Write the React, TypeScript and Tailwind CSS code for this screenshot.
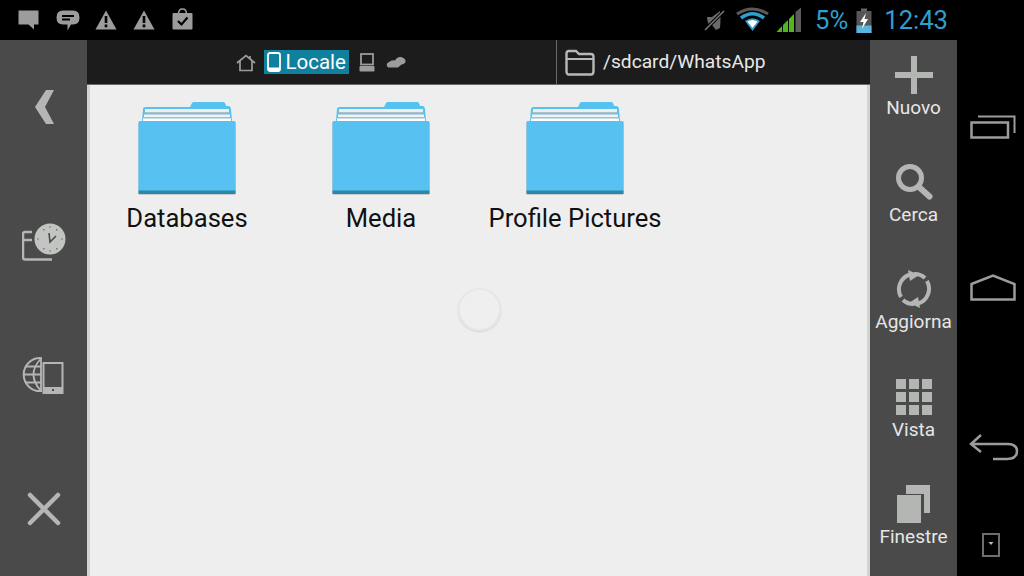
import React from "react";

const G = "#9c9c9c";
const R = "#b4b6b4";

function Folder() {
  return (
    <svg width="98" height="94" viewBox="0 0 98 94" className="block">
      <path d="M4 20 L5 8 Q5 6 8 6 L52 6 L54 2 Q54.500 1 56 1 L85 1 Q87 1 87.500 3 L88 5 L91 5 Q93 6 93 8 L94 20 Z" fill="#55c2f0" />
      <rect x="7" y="8" width="84" height="3.500" fill="#eeeeee" />
      <rect x="6.500" y="11.500" width="85" height="2" fill="#aab0b0" />
      <rect x="6" y="13.500" width="86" height="2.500" fill="#f2f2f2" />
      <rect x="5.500" y="16" width="87" height="1.500" fill="#b4b9b9" />
      <rect x="5" y="17.500" width="88" height="2.500" fill="#ffffff" />
      <path d="M-0 22 Q0 20 2 20 L96 20 Q98 20 98 22 L98 91 Q98 94 96 94 L2 94 Q0 94 0 91 Z" fill="#bdbdbd" opacity="0.75" />
      <path d="M0.500 22 Q0.500 20 2 20 L96 20 Q97.500 20 97.500 22 L97.500 90 L0.500 90 Z" fill="#57c2f1" />
      <rect x="0.500" y="89.500" width="97" height="3.500" fill="#2d87ab" />
    </svg>
  );
}

function FolderItem({ name }: { name: string }) {
  return (
    <div className="flex w-[194px] flex-col items-center">
      <Folder />
      <span className="mt-[7px] whitespace-nowrap text-[25.6px] leading-[32px] text-[#111111]">{name}</span>
    </div>
  );
}

function Warning() {
  return (
    <svg width="22" height="20" viewBox="0 0 22 20">
      <path d="M11 0.500 L21.500 19.500 L0.500 19.500 Z" fill={G} />
      <rect x="9.700" y="6" width="2.600" height="7" fill="#000" />
      <rect x="9.700" y="14.500" width="2.600" height="2.800" fill="#000" />
    </svg>
  );
}

function StatusLeft() {
  return (
    <div className="flex items-center">
      <svg width="21" height="20" viewBox="0 0 21 20" className="ml-[18px]">
        <path d="M0.500 0.500 H20.500 V14.500 H16 V19.500 L10.500 14.500 H0.500 Z" fill={G} />
      </svg>
      <svg width="24" height="21" viewBox="0 0 24 21" className="ml-[17px]">
        <path d="M7 0.500 H17 Q23.500 0.500 23.500 7.500 Q23.500 14.500 17 14.500 H15 L11.500 20.500 V14.500 H7 Q0.500 14.500 0.500 7.500 Q0.500 0.500 7 0.500 Z" fill={G} />
        <rect x="6" y="5" width="12" height="2" fill="#000" />
        <rect x="6" y="8.500" width="8" height="2" fill="#000" />
      </svg>
      <span className="ml-[15px] flex"><Warning /></span>
      <span className="ml-[16px] flex"><Warning /></span>
      <svg width="21" height="22" viewBox="0 0 21 22" className="ml-[17px] -mt-[2px]">
        <path d="M6.500 6 Q6.500 1 10.500 1 Q14.500 1 14.500 6" fill="none" stroke={G} strokeWidth="1.500" />
        <rect x="0.500" y="5" width="20" height="16.500" rx="1" fill={G} />
        <path d="M6 13 L9.500 16.500 L15.500 9.500" fill="none" stroke="#000" strokeWidth="2.200" />
      </svg>
    </div>
  );
}

function StatusRight() {
  return (
    <div className="flex items-center">
      <svg width="22" height="24" viewBox="0 0 22 24">
        <path d="M3 9 L8 9 L16 3 Q17 10 16 20 L12 22 L8 17 H5 Q3 13 3 9 Z" fill="#6b6b6b" />
        <path d="M1 22 L20 3" stroke="#000" strokeWidth="3.400" />
        <path d="M1 22 L20 3" stroke="#7d7d7d" strokeWidth="1.500" />
      </svg>
      <svg width="33" height="26" viewBox="0 0 33 26" className="ml-[10px]">
        <path d="M1 7 Q16.500 -3 32 7" fill="none" stroke="#5a5a5a" strokeWidth="3" />
        <path d="M5 11 Q16.500 2.500 28 11" fill="none" stroke="#2f9fd0" strokeWidth="3.500" />
        <path d="M9 14 Q16.500 8.500 24 14 L16.500 24 Z" fill="#2f9fd0" />
        <path d="M11.500 14.500 Q16.500 11.500 21.500 14.500 L16.500 21 Z" fill="#ffffff" />
      </svg>
      <svg width="26" height="26" viewBox="0 0 26 26" className="ml-[7px]">
        <path d="M0.500 25 L6 19 V25 Z" fill="#4fb81c" />
        <path d="M7 18 L12 13 V25 H7 Z" fill="#4fb81c" />
        <path d="M13 12 L18 7 V25 H13 Z" fill="#4fb81c" />
        <path d="M19.500 5 L25 0.500 V25 H19.500 Z" fill="#5c5c5c" />
      </svg>
      <span className="ml-[13px] text-[25.6px] leading-[32px] text-[#2f9fd0]">5%</span>
      <svg width="16" height="25" viewBox="0 0 16 25" className="ml-[8px]">
        <rect x="5" y="0.500" width="6" height="3" fill="#666" />
        <rect x="0.500" y="3" width="15" height="22" fill="#555" />
        <rect x="0.500" y="17.500" width="15" height="7.500" fill="#5bb4dc" />
        <path d="M10 5 L4 14 H7.500 L6 21 L12 11 H8.500 Z" fill="#ffffff" />
      </svg>
      <span className="ml-[12px] text-[25.6px] leading-[32px] text-[#2f9fd0]">12:43</span>
    </div>
  );
}

function LeftRail() {
  return (
    <div className="grid w-[87px] shrink-0 grid-rows-4 place-items-center bg-[#4a4a4a]">
      <svg width="20" height="36" viewBox="0 0 20 36">
        <path d="M12 1 H20 L11 18 L20 35 H12 L1 18 Z" fill={R} />
      </svg>
      <svg width="44" height="38" viewBox="0 0 44 38" className="mt-[2px]">
        <path d="M10 9 H3 Q1 9 1 11 V34 Q1 36.500 3 36.500 H30" fill="none" stroke={R} strokeWidth="2.500" />
        <path d="M2 17 H10" stroke={R} strokeWidth="2.500" fill="none" />
        <circle cx="28" cy="16" r="15.500" fill="#c2c4c2" />
        <path d="M27 10 L28 19 L34 13" stroke="#4a4a4a" strokeWidth="1.600" fill="none" />
        <g fill="#777">
          <rect x="27.500" y="3" width="1" height="2" />
          <rect x="27.500" y="27" width="1" height="2" />
          <rect x="15" y="15.500" width="2" height="1" />
          <rect x="39" y="15.500" width="2" height="1" />
          <rect x="21" y="6" width="1.500" height="1.500" />
          <rect x="34" y="6" width="1.500" height="1.500" />
          <rect x="21" y="25" width="1.500" height="1.500" />
          <rect x="34" y="25" width="1.500" height="1.500" />
        </g>
      </svg>
      <svg width="42" height="37" viewBox="0 0 42 37" className="mr-[2px]">
        <path d="M20 1.200 A16.500 16.500 0 1 0 20 34" fill="none" stroke={R} strokeWidth="2" />
        <path d="M19 1.500 Q4 17.500 19 34 M19 1.500 V34 M1 17.500 H20 M3.500 9.500 H20 M3.500 25.500 H20" fill="none" stroke={R} strokeWidth="1.800" />
        <rect x="21.500" y="6" width="19" height="30" fill="none" stroke={R} strokeWidth="2" />
        <rect x="21" y="30" width="20" height="6.500" fill={R} />
        <rect x="30" y="32" width="2" height="2" fill="#4a4a4a" />
      </svg>
      <svg width="34" height="34" viewBox="0 0 34 34">
        <path d="M3 3 L31 31 M31 3 L3 31" stroke={R} strokeWidth="4.500" strokeLinecap="round" />
      </svg>
    </div>
  );
}

function RailAction({ label, children }: { label: string; children: React.ReactNode }) {
  return (
    <div className="flex flex-col items-center justify-center pb-[13px]">
      <div className="flex h-[42px] items-center justify-center">{children}</div>
      <span className="text-[19px] leading-[24px] text-[#e6e6e6]">{label}</span>
    </div>
  );
}

function RightRail() {
  return (
    <div className="grid w-[87px] shrink-0 grid-rows-5 bg-[#4a4a4a]">
      <RailAction label="Nuovo">
        <svg width="38" height="38" viewBox="0 0 38 38">
          <rect x="0" y="16" width="38" height="6" fill={R} />
          <rect x="16" y="0" width="6" height="38" fill={R} />
        </svg>
      </RailAction>
      <RailAction label="Cerca">
        <svg width="38" height="38" viewBox="0 0 38 38">
          <circle cx="15" cy="15" r="11.500" fill="none" stroke={R} strokeWidth="5" />
          <path d="M24 24 L34.500 33.500" stroke={R} strokeWidth="6" strokeLinecap="round" />
        </svg>
      </RailAction>
      <RailAction label="Aggiorna">
        <svg width="36" height="38" viewBox="0 0 36 38">
          <path d="M5 27 A15.500 15.500 0 0 1 14 4.500" fill="none" stroke={R} strokeWidth="4" />
          <path d="M31 11 A15.500 15.500 0 0 1 22 33.500" fill="none" stroke={R} strokeWidth="4" />
          <path d="M12 0 L23 5 L14 11 Z" fill={R} />
          <path d="M24 38 L13 33 L22 27 Z" fill={R} />
          <path d="M18 4 A15 15 0 0 1 29 8" fill="none" stroke={R} strokeWidth="4" />
          <path d="M18 34 A15 15 0 0 1 7 30" fill="none" stroke={R} strokeWidth="4" />
        </svg>
      </RailAction>
      <RailAction label="Vista">
        <div className="grid grid-cols-[repeat(3,10px)] grid-rows-[repeat(3,10px)] gap-[3px]">
          {[0, 1, 2, 3, 4, 5, 6, 7, 8].map((i) => (
            <div key={i} className="bg-[#b4b6b4]" />
          ))}
        </div>
      </RailAction>
      <RailAction label="Finestre">
        <svg width="34" height="38" viewBox="0 0 34 38">
          <path d="M9 0 H33 V28 H27 V9 H9 Z" fill={R} />
          <rect x="0" y="10" width="24" height="28" fill={R} />
        </svg>
      </RailAction>
    </div>
  );
}

function NavBar() {
  return (
    <div className="flex w-[67px] shrink-0 flex-col items-center bg-black pt-[47px]">
      <div className="flex h-[160px] items-center pl-[5px]">
        <svg width="46" height="24" viewBox="0 0 46 24">
          <path d="M1.500 7.500 H38 V22.500 H1.500 Z" fill="none" stroke={G} strokeWidth="2.500" />
          <path d="M8 1.500 H44.500 V18" fill="none" stroke={G} strokeWidth="2" />
        </svg>
      </div>
      <div className="flex h-[160px] items-center pl-[4px]">
        <svg width="46" height="27" viewBox="0 0 46 27">
          <path d="M1.500 10 L23 1.500 L44.500 10 V25.500 H1.500 Z" fill="none" stroke={G} strokeWidth="2.500" />
        </svg>
      </div>
      <div className="flex h-[160px] items-center pl-[7px]">
        <svg width="50" height="28" viewBox="0 0 50 28">
          <path d="M12 2 L2 11 L12 19" fill="none" stroke={G} strokeWidth="2.500" />
          <path d="M2 11 H38 Q48 11 48 18 Q48 26 38 26 H24" fill="none" stroke={G} strokeWidth="2.500" />
        </svg>
      </div>
      <div className="flex h-[36px] items-center">
        <svg width="18" height="24" viewBox="0 0 18 24">
          <rect x="1" y="1" width="16" height="22" fill="none" stroke="#6e6e6e" strokeWidth="2" />
          <path d="M6.500 9 H11.500 L9 12 Z" fill="#bbb" />
        </svg>
      </div>
    </div>
  );
}

function Header() {
  return (
    <div className="flex h-[45px] shrink-0 border-b border-[#6a6a6a] bg-[#1c1c1c]">
      <div className="flex w-[470px] items-center justify-center border-r border-[#6a6a6a]">
        <svg width="20" height="18" viewBox="0 0 20 18" className="mr-[8px] mt-[2px]">
          <path d="M1 9 L10 1.500 L19 9 M4 7 V16.500 H16 V7 M14 2 V5" fill="none" stroke={G} strokeWidth="1.700" />
        </svg>
        <div className="flex h-[24px] w-[85px] items-center bg-[#10809f]">
          <svg width="14" height="20" viewBox="0 0 14 20" className="ml-[3px]">
            <rect x="1" y="1" width="12" height="18" rx="2" fill="none" stroke="#fff" strokeWidth="1.800" />
            <rect x="1" y="15.500" width="12" height="3.500" fill="#fff" />
          </svg>
          <span className="ml-[5px] text-[20.5px] leading-[24px] text-white">Locale</span>
        </div>
        <svg width="16" height="19" viewBox="0 0 16 19" className="ml-[10px]">
          <rect x="2" y="1" width="12" height="10.500" fill="none" stroke={G} strokeWidth="1.800" />
          <rect x="0.500" y="13" width="15" height="5.500" rx="1" fill={G} />
        </svg>
        <svg width="20" height="12" viewBox="0 0 20 12" className="ml-[11px] mr-[2px]">
          <path d="M2 11.500 Q-1 8 3 6 Q6 3.500 9 4.500 Q11 0.500 15 1 Q20 2.500 19.500 5.500 Q19 8 15.500 8.500 L12 11.500 Z" fill={G} />
        </svg>
      </div>
      <div className="flex items-center">
        <svg width="30" height="27" viewBox="0 0 30 27" className="ml-[8px]">
          <path d="M1.500 5 Q1.500 2 4 2 H11 L14 5 H26 Q28.500 5 28.500 8 V22 Q28.500 25.500 26 25.500 H4 Q1.500 25.500 1.500 22 Z" fill="none" stroke="#b8b8b8" strokeWidth="2.400" />
          <path d="M2 10 H28" stroke="#b8b8b8" strokeWidth="2" />
        </svg>
        <span className="ml-[8px] text-[19.2px] leading-[26px] text-[#e8e8e8]">/sdcard/WhatsApp</span>
      </div>
    </div>
  );
}

export default function App() {
  return (
    <div className="flex h-[576px] w-[1024px] overflow-hidden bg-black font-['Roboto',sans-serif]">
      <div className="flex w-[957px] shrink-0 flex-col">
        <div className="flex h-[40px] shrink-0 items-center justify-between bg-black pr-[9px]">
          <StatusLeft />
          <StatusRight />
        </div>
        <div className="flex min-h-0 flex-1">
          <LeftRail />
          <div className="flex min-w-0 flex-1 flex-col">
            <Header />
            <div className="relative flex-1 border-x-[3px] border-x-[#d2d4d2] bg-[#eeeeee] pt-[16px]">
              <div className="flex">
                <FolderItem name="Databases" />
                <FolderItem name="Media" />
                <FolderItem name="Profile Pictures" />
              </div>
              <div className="absolute left-[368px] top-[203px] h-[43px] w-[43px] rounded-full border-[2px] border-[#e6e7e7] bg-[#efefef] shadow-[0_1px_2px_rgba(0,0,0,0.12)]" />
            </div>
          </div>
          <RightRail />
        </div>
      </div>
      <NavBar />
    </div>
  );
}
